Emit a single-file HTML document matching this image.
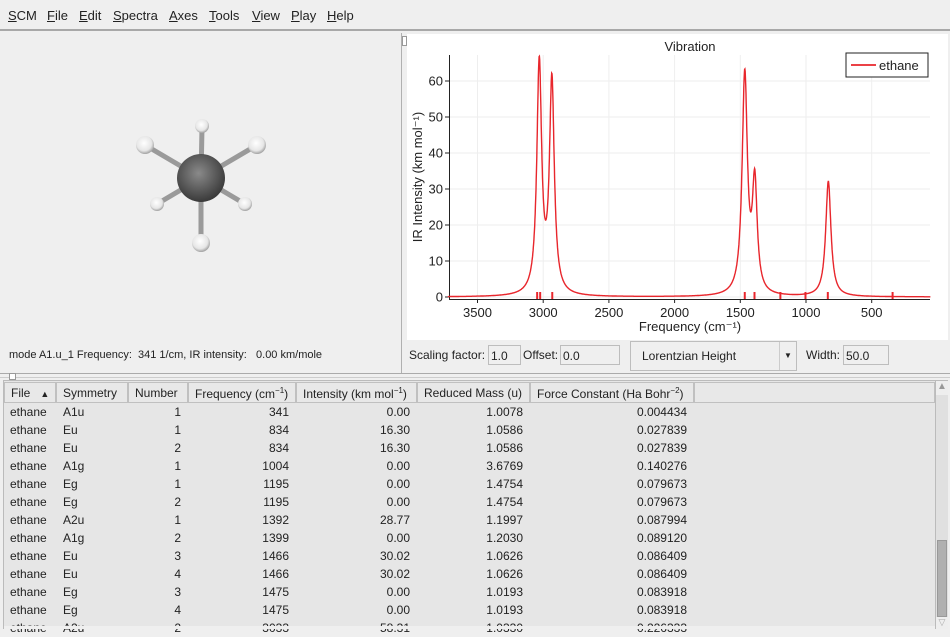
<!DOCTYPE html>
<html><head><meta charset="utf-8"><style>
*{box-sizing:border-box}
body{margin:0;width:950px;height:629px;overflow:hidden;background:#efefef;font-family:"Liberation Sans",sans-serif;font-size:12px;color:#222;position:relative}
.abs{position:absolute}
.menu{top:0;left:0;width:950px;height:31px;background:#efefef;border-bottom:2px solid #a8a8a8}
.menu span{position:absolute;top:8px;font-size:13px}
.menu u{text-decoration:underline}
.inp{background:#efefef;border:1px solid #bdbdbd;height:20px;font-size:12px;padding:3px 2px}
.th{position:absolute;top:382px;height:21px;background:#e8e8e8;border:1px solid #c0c0c0;padding:3px 6px;font-size:12px;white-space:nowrap}
.row{position:absolute;left:0;width:950px;height:18px;font-size:12px}
.row span{position:absolute;top:2px;white-space:nowrap}
</style></head><body>
<div class="abs menu">
<span style="left:8px"><u>S</u>CM</span><span style="left:47px"><u>F</u>ile</span><span style="left:79px"><u>E</u>dit</span><span style="left:113px"><u>S</u>pectra</span><span style="left:169px"><u>A</u>xes</span><span style="left:209px"><u>T</u>ools</span><span style="left:252px"><u>V</u>iew</span><span style="left:291px"><u>P</u>lay</span><span style="left:327px"><u>H</u>elp</span>
</div>
<div class="abs" style="left:0;top:33px;width:401px;height:340px;background:#efefef"></div>
<svg class="abs" style="left:120px;top:110px" width="160" height="150" viewBox="120 110 160 150">
<defs>
<radialGradient id="c" cx="0.45" cy="0.4" r="0.6"><stop offset="0" stop-color="#8a8a8a"/><stop offset="0.6" stop-color="#5a5a5a"/><stop offset="1" stop-color="#3a3a3a"/></radialGradient>
<radialGradient id="h" cx="0.45" cy="0.4" r="0.6"><stop offset="0" stop-color="#fff"/><stop offset="0.7" stop-color="#e6e6e6"/><stop offset="1" stop-color="#a0a0a0"/></radialGradient>
</defs>
<g stroke="#9a9a9a" stroke-width="5" stroke-linecap="round">
<line x1="201" y1="178" x2="202" y2="128"/><line x1="201" y1="178" x2="145" y2="145"/><line x1="201" y1="178" x2="257" y2="145"/>
<line x1="201" y1="178" x2="157" y2="204"/><line x1="201" y1="178" x2="245" y2="204"/><line x1="201" y1="178" x2="201" y2="242"/>
</g>
<circle cx="202" cy="126" r="7" fill="url(#h)"/><circle cx="145" cy="145" r="9" fill="url(#h)"/><circle cx="257" cy="145" r="9" fill="url(#h)"/>
<circle cx="201" cy="178" r="24" fill="url(#c)"/>
<circle cx="157" cy="204" r="7" fill="url(#h)"/><circle cx="245" cy="204" r="7" fill="url(#h)"/><circle cx="201" cy="243" r="9" fill="url(#h)"/>
</svg>
<div class="abs" style="left:9px;top:349px;font-size:11px">mode A1.u_1 Frequency:&nbsp; 341 1/cm, IR intensity:&nbsp;&nbsp; 0.00 km/mole</div>
<div class="abs" style="left:401px;top:33px;width:3px;height:340px;border-left:1px solid #b0b0b0"></div>
<div class="abs" style="left:402px;top:36px;width:5px;height:10px;border:1px solid #999;background:#fff"></div>
<div class="abs" style="left:407px;top:34px;width:541px;height:306px;background:#fff"></div>
<svg class="abs" style="left:407px;top:34px" width="541" height="306" viewBox="407 34 541 306" font-family="Liberation Sans, sans-serif" font-size="13" fill="#222">
<text x="690" y="51" text-anchor="middle">Vibration</text>
<g stroke="#eee" stroke-width="1" id="grid"></g>
<line x1="449.5" y1="55" x2="449.5" y2="300" stroke="#222"/>
<line x1="449" y1="299.5" x2="930" y2="299.5" stroke="#222"/>
<g id="ticks"></g>
<text transform="translate(422,177) rotate(-90)" text-anchor="middle">IR Intensity (km mol⁻¹)</text>
<text x="690" y="331" text-anchor="middle">Frequency (cm⁻¹)</text>
<path id="spec" fill="none" stroke="#e8262c" stroke-width="1.4"/>
<g id="sticks" stroke="#e8262c" stroke-width="2"></g>
<rect x="846" y="53" width="82" height="24" fill="#fff" stroke="#222"/>
<line x1="851" y1="65" x2="876" y2="65" stroke="#e8262c" stroke-width="1.8"/>
<text x="879" y="70">ethane</text>
</svg>
<script>
(function(){
var X=function(f){return 806+(1000-f)*0.1314}, Y=function(v){return 297-v*3.6};
var g=document.getElementById('grid'),t=document.getElementById('ticks'),s='';
var tt='';
[3500,3000,2500,2000,1500,1000,500].forEach(function(f){var x=X(f);s+='<line x1="'+x+'" y1="55" x2="'+x+'" y2="299"/>';tt+='<line x1="'+x+'" y1="299" x2="'+x+'" y2="303" stroke="#222"/><text x="'+x+'" y="317" text-anchor="middle">'+f+'</text>';});
[0,10,20,30,40,50,60].forEach(function(v){var y=Y(v);s+='<line x1="450" y1="'+y+'" x2="930" y2="'+y+'"/>';tt+='<line x1="445" y1="'+y+'" x2="449" y2="'+y+'" stroke="#222"/><text x="443" y="'+(y+4.5)+'" text-anchor="end">'+v+'</text>';});
g.innerHTML=s;t.innerHTML=tt;
var P=[[3030,64,22],[2934,59,22],[1466,61,24],[1390,30,22],[830,32,24]];
var d='';for(var f=3725;f>=53;f-=2){var v=0;P.forEach(function(p){var q=(f-p[0])/p[2];v+=p[1]/(1+q*q)});d+=(d?'L':'M')+X(f).toFixed(1)+','+Y(v).toFixed(1);}
document.getElementById('spec').setAttribute('d',d);
var st='';[3046,3023,2931,1466,1392,1195,1004,834,341].forEach(function(f){var x=X(f);st+='<line x1="'+x+'" y1="299" x2="'+x+'" y2="292"/>';});
document.getElementById('sticks').innerHTML=st;
})();
</script>
<div class="abs" style="left:409px;top:348px">Scaling factor:</div>
<div class="abs inp" style="left:488px;top:345px;width:33px">1.0</div>
<div class="abs" style="left:523px;top:348px">Offset:</div>
<div class="abs inp" style="left:560px;top:345px;width:60px">0.0</div>
<div class="abs" style="left:630px;top:341px;width:167px;height:30px;border:1px solid #bdbdbd;background:#efefef"><span style="position:absolute;left:11px;top:7px">Lorentzian Height</span><span style="position:absolute;right:0;top:0;width:17px;height:28px;border-left:1px solid #ccc;font-size:8px;text-align:center;line-height:28px">▼</span></div>
<div class="abs" style="left:806px;top:348px">Width:</div>
<div class="abs inp" style="left:843px;top:345px;width:46px">50.0</div>
<div class="abs" style="left:0;top:373px;width:950px;height:5px;border-top:1px solid #aaa;border-bottom:1px solid #ccc"></div>
<div class="abs" style="left:9px;top:373px;width:7px;height:7px;border:1px solid #999;background:#fff"></div>
<div class="abs" style="left:3px;top:380px;width:945px;height:249px;background:#e6e6e6;border:1px solid #bbb"></div>
<div class="th" style="left:4px;width:52px">File&nbsp;&nbsp;&nbsp;<span style="font-size:9px">▲</span></div>
<div class="th" style="left:56px;width:72px">Symmetry</div>
<div class="th" style="left:128px;width:60px">Number</div>
<div class="th" style="left:188px;width:108px">Frequency (cm<sup style="font-size:8px">−1</sup>)</div>
<div class="th" style="left:296px;width:121px">Intensity (km mol<sup style="font-size:8px">−1</sup>)</div>
<div class="th" style="left:417px;width:113px">Reduced Mass (u)</div>
<div class="th" style="left:530px;width:164px">Force Constant (Ha Bohr<sup style="font-size:8px">−2</sup>)</div>
<div class="th" style="left:694px;width:241px;padding:0"></div>
<div id="rows"></div>
<script>
var R=[["A1u",1,341,"0.00","1.0078","0.004434"],["Eu",1,834,"16.30","1.0586","0.027839"],["Eu",2,834,"16.30","1.0586","0.027839"],["A1g",1,1004,"0.00","3.6769","0.140276"],["Eg",1,1195,"0.00","1.4754","0.079673"],["Eg",2,1195,"0.00","1.4754","0.079673"],["A2u",1,1392,"28.77","1.1997","0.087994"],["A1g",2,1399,"0.00","1.2030","0.089120"],["Eu",3,1466,"30.02","1.0626","0.086409"],["Eu",4,1466,"30.02","1.0626","0.086409"],["Eg",3,1475,"0.00","1.0193","0.083918"],["Eg",4,1475,"0.00","1.0193","0.083918"],["A2u",2,3033,"58.31","1.0330","0.226333"]];
var h='';R.forEach(function(r,i){var y=403+i*18;h+='<div class="row" style="top:'+y+'px"><span style="left:10px">ethane</span><span style="left:63px">'+r[0]+'</span><span style="right:'+(950-181)+'px">'+r[1]+'</span><span style="right:'+(950-289)+'px">'+r[2]+'</span><span style="right:'+(950-410)+'px">'+r[3]+'</span><span style="right:'+(950-523)+'px">'+r[4]+'</span><span style="right:'+(950-687)+'px">'+r[5]+'</span></div>';});
document.getElementById('rows').innerHTML=h;
</script>
<div class="abs" style="left:4px;top:626px;width:931px;height:3px;background:#efefef"></div>
<div class="abs" style="left:935px;top:381px;width:13px;height:248px;background:#e0e0e0;border-left:1px solid #bbb"></div>
<div class="abs" style="left:936px;top:381px;width:12px;height:14px;font-size:10px;color:#999;text-align:center;background:#eee">▲</div>
<div class="abs" style="left:937px;top:540px;width:10px;height:77px;background:#b0b0b0;border:1px solid #999"></div>
<div class="abs" style="left:936px;top:617px;width:12px;height:12px;font-size:9px;color:#aaa;text-align:center;background:#eee">▽</div>
</body></html>
